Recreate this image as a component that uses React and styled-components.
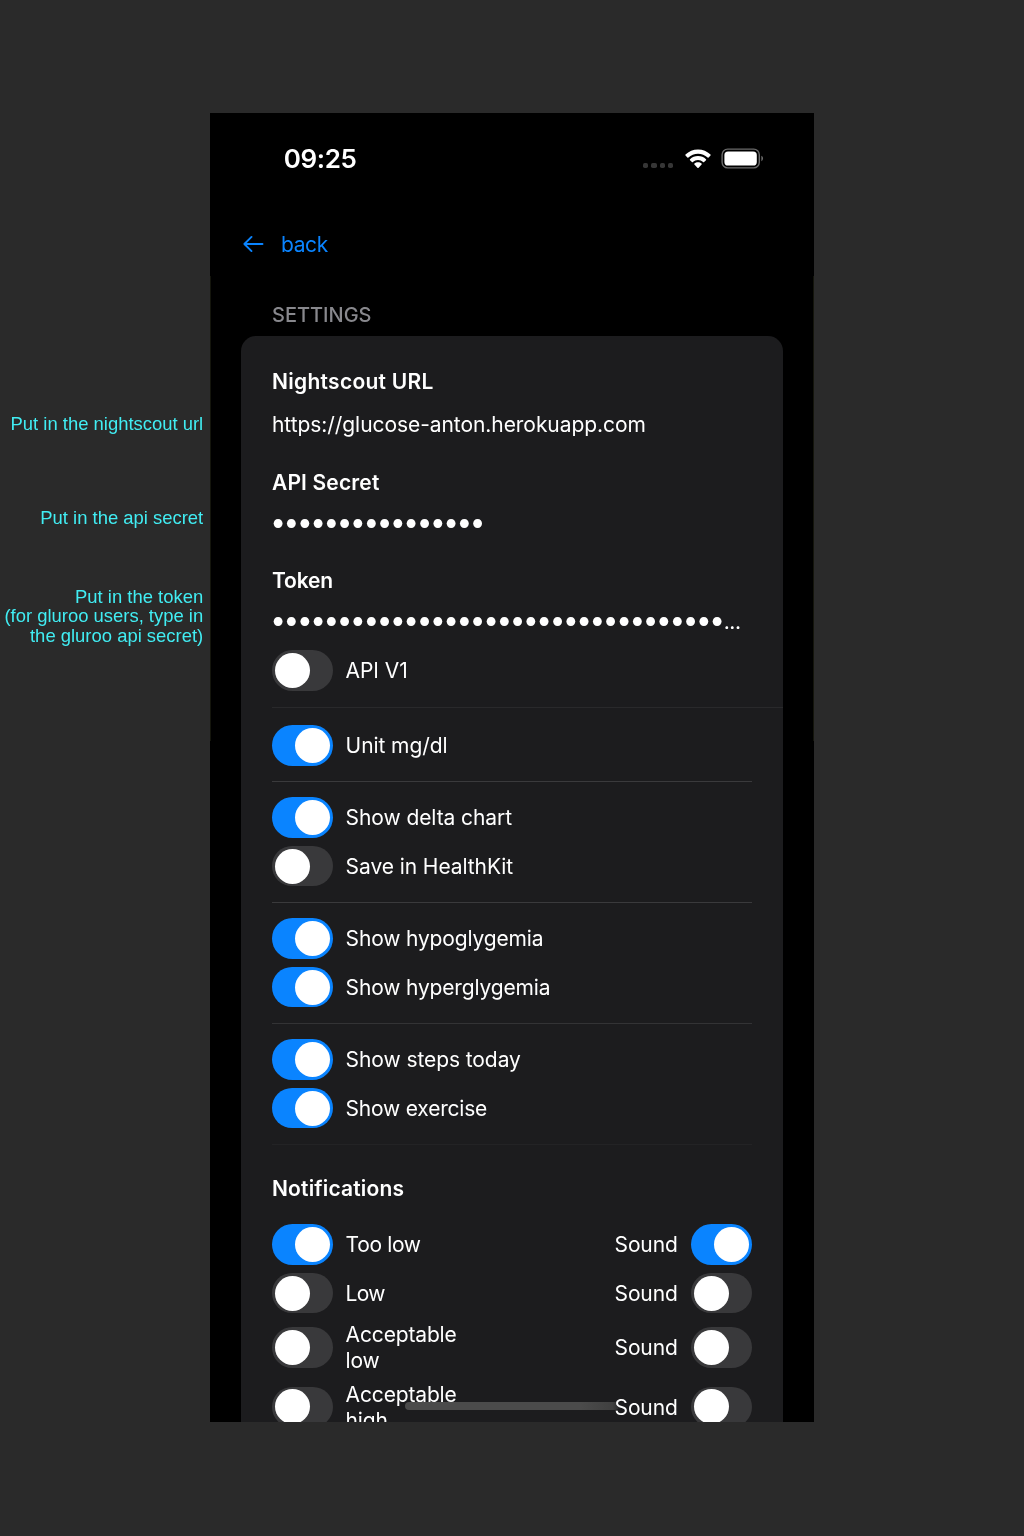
import React from "react";
import styled, { createGlobalStyle } from "styled-components";

const GlobalStyle = createGlobalStyle`
  * { box-sizing: border-box; }
  body {
    margin: 0;
    background: #2a2a2a;
    color: #fff;
    font-family: Inter, "Noto Sans", sans-serif;
  }
`;

const Page = styled.main`
  display: flex;
  align-items: flex-start;
  height: 1536px;
  overflow: hidden;
  padding-top: 113px;
`;

const Notes = styled.aside`
  flex: none;
  width: 210px;
  padding: 301px 6.8px 0 0;
  color: #41edf3;
  font: 18.45px/19.1px "Liberation Sans", Arial, sans-serif;
  text-align: right;
  white-space: nowrap;
`;

const Note = styled.p`
  margin: 0 0 ${(p) => p.$gap || 0}px;
`;

const Phone = styled.section`
  position: relative;
  flex: none;
  width: 604px;
  height: 1309px;
  overflow: hidden;
  background:
    linear-gradient(#14150c, #14150c) 0 163px / 1px 465px no-repeat,
    linear-gradient(#14150c, #14150c) 100% 163px / 1px 465px no-repeat,
    #000;
`;

const StatusBar = styled.header`
  display: flex;
  align-items: center;
  justify-content: space-between;
  height: 91px;
  padding: 0 50.1px 0 73.7px;
`;

const Clock = styled.time`
  font-size: 26px;
  font-weight: 600;
  line-height: 32px;
  letter-spacing: -0.35px;
`;

const StatusIcons = styled.div`
  display: flex;
  align-items: center;
`;

const Signal = styled.div`
  display: flex;
  gap: 3.2px;
  margin: 14px 11.2px 0 0;
`;

const SignalDot = styled.i`
  width: 5.2px;
  height: 5.2px;
  border-radius: 1.8px;
  background: #363636;
`;

const WifiIcon = styled.svg`
  width: 26px;
  height: 20px;
  margin-right: 10.4px;
`;

const BatteryIcon = styled.svg`
  width: 43px;
  height: 21px;
`;

const BackLink = styled.a`
  display: flex;
  align-items: center;
  gap: 17px;
  height: 26px;
  margin: 28px 0 0 33px;
  color: #0a84ff;
  font-size: 21px;
  line-height: 26px;
  letter-spacing: -0.4px;
`;

const ArrowIcon = styled.svg`
  width: 21px;
  height: 18px;
  margin-top: -2px;
`;

const SectionTitle = styled.h1`
  height: 26px;
  margin: 44px 0 8px 62px;
  color: #88888d;
  font-size: 20px;
  font-weight: 500;
  line-height: 26px;
`;

const Card = styled.div`
  width: 542px;
  height: 1110px;
  margin: 0 auto;
  padding: 32px 31px 0;
  border-radius: 15px 15px 0 0;
  background: #1c1c1e;
`;

const Heading = styled.h2`
  height: 26px;
  margin: 0;
  padding-top: 0.6px;
  font-size: 21px;
  font-weight: 600;
  line-height: 26px;
  letter-spacing: ${(p) => p.$track || 0}px;
`;

const Field = styled.div`
  display: flex;
  flex-direction: column;
  gap: ${(p) => p.$gap}px;
  margin-bottom: ${(p) => p.$after}px;
`;

const Value = styled.div`
  display: flex;
  height: 26px;
  padding-top: 0.6px;
  font-size: 21px;
  line-height: 26px;
  letter-spacing: -0.06px;
  white-space: nowrap;
`;

const Mask = styled.span`
  padding-left: 0.8px;
  font-size: 11.7px;
  letter-spacing: ${(p) => p.$track}px;
`;

const Ellipsis = styled.span`
  margin-left: -1.4px;
  letter-spacing: -0.4px;
`;

const Group = styled.div`
  display: flex;
  flex-direction: column;
  gap: 8px;
  padding: ${(p) => p.$top}px 0 ${(p) => p.$bottom}px;
`;

const Divider = styled.hr`
  height: 1px;
  margin: 0 ${(p) => (p.$bleed ? -31 : 0)}px 0 0;
  border: 0;
  background: ${(p) => p.$color || "#3a3a3c"};
`;

const Row = styled.div`
  display: flex;
  align-items: center;
  min-height: 40.75px;
`;

const Label = styled.span`
  max-width: ${(p) => (p.$narrow ? "120px" : "none")};
  margin: 0.8px 0 -0.8px 12.6px;
  font-size: 21px;
  line-height: 25.8px;
  letter-spacing: ${(p) => p.$track ?? -0.08}px;
`;

const SoundLabel = styled.span`
  margin: 0.8px 13px -0.8px auto;
  font-size: 21px;
  line-height: 25.8px;
  letter-spacing: -0.15px;
`;

const Track = styled.span`
  display: flex;
  flex: none;
  align-items: center;
  justify-content: ${(p) => (p.$on ? "flex-end" : "flex-start")};
  width: 61.4px;
  height: 40.75px;
  margin-left: ${(p) => (p.$lead ? "-0.4px" : "0")};
  padding: 0 2.9px;
  border-radius: 20.4px;
  background: ${(p) => (p.$on ? "#0a84ff" : "#39393b")};
`;

const Knob = styled.span`
  width: 35.2px;
  height: 35.2px;
  border-radius: 50%;
  background: #fff;
`;

const HomeIndicator = styled.div`
  position: absolute;
  left: 195px;
  top: 1289px;
  width: 214px;
  height: 8px;
  border-radius: 4px;
  background: linear-gradient(90deg, #4b4b4b 82%, #404040 97%, #2c2c2d);
  mix-blend-mode: lighten;
`;

function Toggle({ on, lead }) {
  return (
    <Track $on={on} $lead={lead} role="switch" aria-checked={!!on}>
      <Knob />
    </Track>
  );
}

function Option({ label, on, track }) {
  return (
    <Row>
      <Toggle on={on} lead />
      <Label $track={track}>{label}</Label>
    </Row>
  );
}

function NotificationRow({ label, on, sound, track }) {
  return (
    <Row>
      <Toggle on={on} lead />
      <Label $narrow $track={track}>{label}</Label>
      <SoundLabel>Sound</SoundLabel>
      <Toggle on={sound} />
    </Row>
  );
}

const notifications = [
  { label: "Too low", on: true, sound: true, track: -0.35 },
  { label: "Low", track: -0.7 },
  { label: "Acceptable low", track: -0.15 },
  { label: "Acceptable high", track: -0.15 },
];

export default function App() {
  return (
    <Page>
      <GlobalStyle />
      <Notes>
        <Note $gap={75}>Put in the nightscout url</Note>
        <Note $gap={60.2}>Put in the api secret</Note>
        <Note>
          Put in the token
          <br />
          (for gluroo users, type in
          <br />
          the gluroo api secret)
        </Note>
      </Notes>
      <Phone>
        <StatusBar>
          <Clock>09:25</Clock>
          <StatusIcons>
            <Signal>
              <SignalDot />
              <SignalDot />
              <SignalDot />
              <SignalDot />
            </Signal>
            <WifiIcon viewBox="0 0 26 20" fill="#fff">
              <path d="M13 .6c4.8 0 9.2 1.9 12.5 5 .3.3.3.7 0 1l-1.9 1.9c-.3.3-.7.3-1 0A14 14 0 0 0 13 4.7c-3.7 0-7 1.4-9.6 3.8-.3.3-.7.3-1 0L.5 6.6c-.3-.3-.3-.7 0-1C3.8 2.5 8.2.6 13 .6Z" />
              <path d="M13 7c3.1 0 5.9 1.2 8 3.2.3.3.3.7 0 1l-1.9 1.9c-.3.3-.7.3-1 0A7.5 7.5 0 0 0 13 11.1c-2 0-3.7.7-5.1 2-.3.3-.7.3-1 0L5 11.2c-.3-.3-.3-.7 0-1C7.1 8.2 9.9 7 13 7Z" />
              <path d="M13 13.2c1.4 0 2.6.5 3.6 1.4.3.3.3.7 0 1l-3 3.2c-.4.4-.8.4-1.2 0l-3-3.2c-.3-.3-.3-.7 0-1 1-.9 2.2-1.4 3.6-1.4Z" />
            </WifiIcon>
            <BatteryIcon viewBox="0 0 43 21" fill="none">
              <rect x="1.1" y="1.1" width="37.2" height="18.8" rx="5.6" stroke="#6b6b6b" strokeWidth="1.4" />
              <rect x="3.4" y="3.5" width="32.4" height="14" rx="3.6" fill="#fff" />
              <path d="M40.4 7.8c2.1.9 2.1 4.5 0 5.4Z" fill="#707070" />
            </BatteryIcon>
          </StatusIcons>
        </StatusBar>
        <BackLink>
          <ArrowIcon viewBox="0 0 21 18" fill="none" stroke="#0a84ff" strokeWidth="1.9" strokeLinecap="round" strokeLinejoin="round">
            <path d="M19.5 9H1.5M8.5 1.9 1.4 9l7.1 7.1" />
          </ArrowIcon>
          back
        </BackLink>
        <SectionTitle>SETTINGS</SectionTitle>
        <Card>
          <Field $gap={17} $after={32}>
            <Heading $track={0.28}>Nightscout URL</Heading>
            <Value>https://glucose-anton.herokuapp.com</Value>
          </Field>
          <Field $gap={15.3} $after={31}>
            <Heading $track={0.15}>API Secret</Heading>
            <Value>
              <Mask $track={2.62}>{"●".repeat(16)}</Mask>
            </Value>
          </Field>
          <Field $gap={15.3} $after={15.4}>
            <Heading $track={-0.15}>Token</Heading>
            <Value>
              <Mask $track={2.62}>{"●".repeat(34)}</Mask>
              <Ellipsis>...</Ellipsis>
            </Value>
          </Field>
          <Group $top={0} $bottom={16.25}>
            <Option label="API V1" />
          </Group>
          <Divider $bleed $color="#29292b" />
          <Group $top={17} $bottom={15.25}>
            <Option label="Unit mg/dl" on />
          </Group>
          <Divider />
          <Group $top={15} $bottom={15.5}>
            <Option label="Show delta chart" on />
            <Option label="Save in HealthKit" />
          </Group>
          <Divider />
          <Group $top={15} $bottom={15.5}>
            <Option label="Show hypoglygemia" on track={-0.16} />
            <Option label="Show hyperglygemia" on track={-0.16} />
          </Group>
          <Divider $color="#333335" />
          <Group $top={15} $bottom={15.5}>
            <Option label="Show steps today" on />
            <Option label="Show exercise" on track={-0.2} />
          </Group>
          <Divider $color="#232325" />
          <Group $top={30} $bottom={15}>
            <Heading $track={0.17}>Notifications</Heading>
          </Group>
          <Group $top={8} $bottom={0}>
            {notifications.map((n) => (
              <NotificationRow key={n.label} {...n} />
            ))}
          </Group>
        </Card>
        <HomeIndicator />
      </Phone>
    </Page>
  );
}
